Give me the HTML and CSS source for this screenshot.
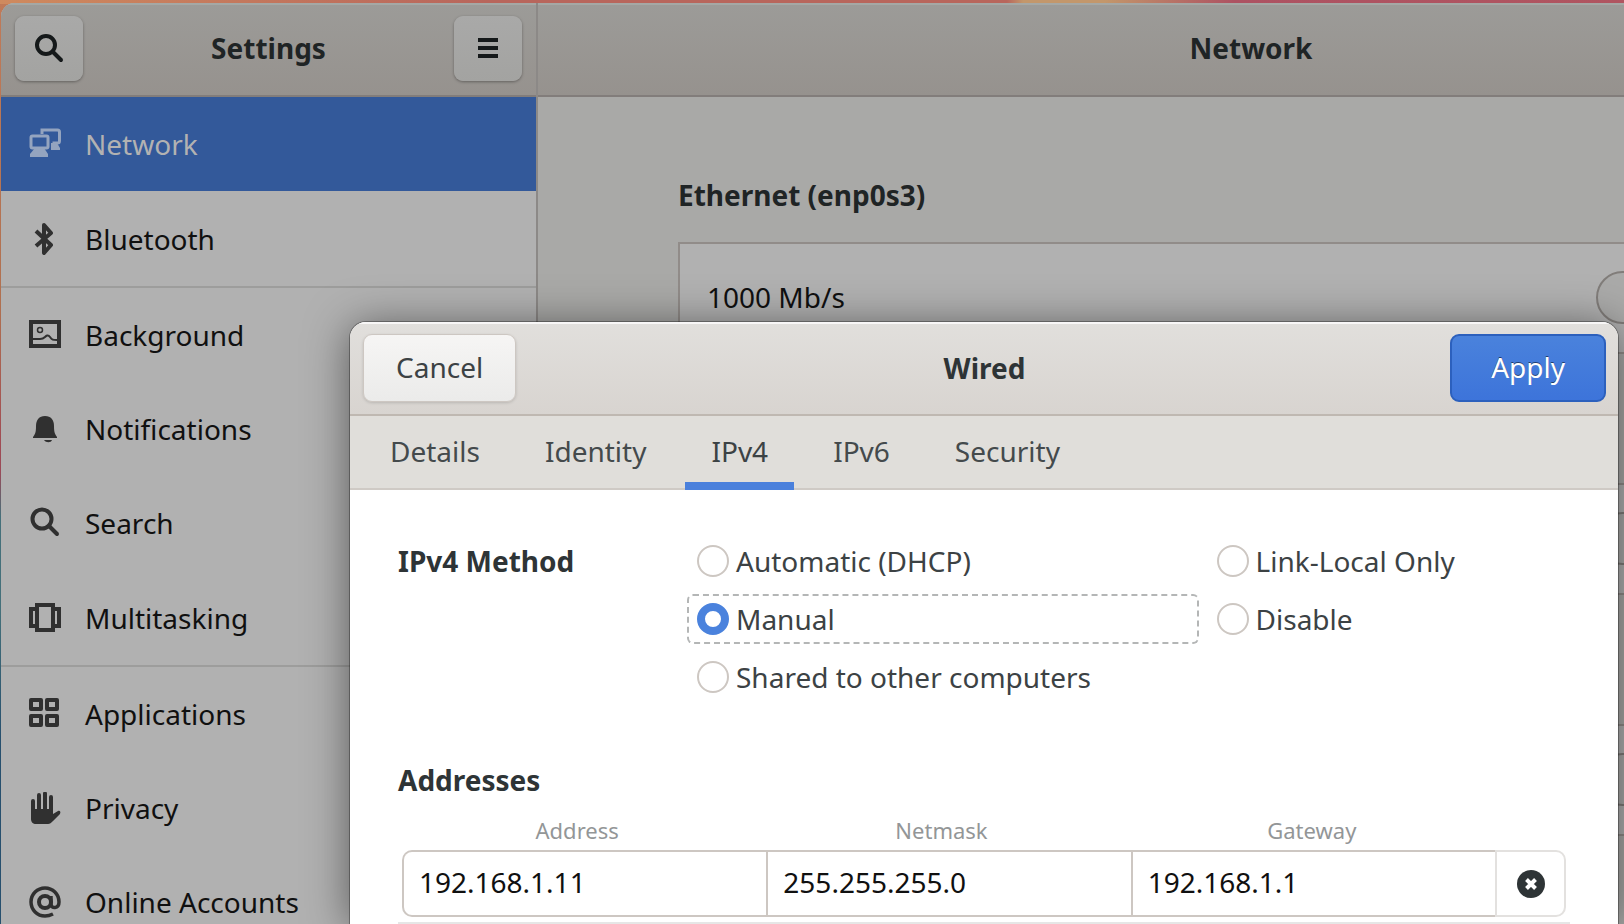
FILE: index.html
```html
<!DOCTYPE html>
<html lang="en">
<head>
    <meta charset="utf-8">
    <title>Settings</title>
    <link rel="stylesheet" href="styles.css">
</head>
<body>
<div class="window">
    <aside class="sidebar">
        <header class="headerbar">
            <button class="icon-button" aria-label="Search settings">
                <svg class="icon" viewBox="0 0 32 32"><circle cx="13" cy="13" r="9" fill="none" stroke="currentColor" stroke-width="4"/><path d="M20 20l8 8" stroke="currentColor" stroke-width="4" stroke-linecap="round"/></svg>
            </button>
            <h1>Settings</h1>
            <button class="icon-button" aria-label="Menu">
                <svg class="icon" viewBox="0 0 32 32"><path d="M6 8h20M6 16h20M6 24h20" stroke="currentColor" stroke-width="4"/></svg>
            </button>
        </header>
        <nav>
            <a href="#network" class="selected">
                <svg class="icon" viewBox="0 0 32 32"><path d="M13 6V2H28.500a2 2 0 0 1 2 2V13a2 2 0 0 1-2 2h-5" fill="none" stroke="currentColor" stroke-width="3"/><path d="M22 15h6l3 5v2h-9z" fill="currentColor"/><rect x="2" y="8" width="17" height="12" rx="1.500" fill="none" stroke="currentColor" stroke-width="3"/><path d="M6 20h9l4 6v3H1v-3z" fill="currentColor"/></svg>
                Network
            </a>
            <a href="#bluetooth" class="group-end">
                <svg class="icon" viewBox="0 0 32 32"><path d="M7 8l15 14-7 8V2l7 8L7 23" fill="none" stroke="currentColor" stroke-width="4" stroke-linejoin="round"/></svg>
                Bluetooth
            </a>
            <a href="#background">
                <svg class="icon" viewBox="0 0 32 32"><rect x="2" y="3" width="28" height="24" fill="none" stroke="currentColor" stroke-width="4"/><circle cx="11" cy="11" r="2.500" fill="none" stroke="currentColor" stroke-width="1.500"/><path d="M4 20h7c3 0 4-1 5-2s3-3 5 0 3 3 7 3" fill="none" stroke="currentColor" stroke-width="2"/></svg>
                Background
            </a>
            <a href="#notifications">
                <svg class="icon" viewBox="0 0 32 32"><path d="M16 3c6 0 9 4 9 10 0 7 1 8 3 11v1H4v-1c2-3 3-4 3-11 0-6 3-10 9-10z" fill="currentColor"/><path d="M15 27h8c-1 3-6 3-8 0z" fill="currentColor"/></svg>
                Notifications
            </a>
            <a href="#search">
                <svg class="icon" viewBox="0 0 32 32"><circle cx="13" cy="12" r="9.500" fill="none" stroke="currentColor" stroke-width="4"/><path d="M20 19l8 8" stroke="currentColor" stroke-width="4" stroke-linecap="round"/></svg>
                Search
            </a>
            <a href="#multitasking" class="group-end">
                <svg class="icon" viewBox="0 0 32 32"><path d="M8 3h16v25H8zM7 7H2v17h5M25 7h5v17h-5" fill="none" stroke="currentColor" stroke-width="4"/></svg>
                Multitasking
            </a>
            <a href="#applications">
                <svg class="icon" viewBox="0 0 32 32"><path d="M2 2h10v9H2zM18 2h10v9H18zM2 18h10v9H2zM18 18h10v9H18z" fill="none" stroke="currentColor" stroke-width="4" stroke-linejoin="round"/></svg>
                Applications
            </a>
            <a href="#privacy">
                <svg class="icon" viewBox="0 0 32 32"><path d="M4 9v14M10 3v16M16 1.500V19M22 5v14" fill="none" stroke="currentColor" stroke-width="4" stroke-linecap="round"/><path d="M2 17h22v5l5-3c2-1 3 1 2 3l-7 7c-2 2-3 3-5 3H7c-3 0-5-2-5-5z" fill="currentColor"/></svg>
                Privacy
            </a>
            <a href="#online-accounts">
                <svg class="icon" viewBox="0 0 32 32"><circle cx="16" cy="16" r="6" fill="none" stroke="currentColor" stroke-width="4"/><path d="M22 10v8c0 5 8 5 8-2A14 14 0 1 0 16 30c3 0 5-.5 8-2" fill="none" stroke="currentColor" stroke-width="3.500"/></svg>
                Online Accounts
            </a>
        </nav>
    </aside>
    <main class="panel">
        <header class="headerbar">
            <h1>Network</h1>
        </header>
        <div class="panel-body">
            <h2>Ethernet (enp0s3)</h2>
            <div class="card">
                <label for="ethernet">1000 Mb/s</label>
                <input type="checkbox" class="switch" id="ethernet">
            </div>
            <div class="card">
                <input type="checkbox" class="switch" aria-label="VPN">
            </div>
            <div class="card">
                <input type="checkbox" class="switch" aria-label="Network proxy">
            </div>
        </div>
    </main>
</div>

<form class="dialog" role="dialog" aria-labelledby="dialog-title">
    <header class="dialog-header">
        <button type="button" class="cancel">Cancel</button>
        <h1 id="dialog-title">Wired</h1>
        <button type="button" class="apply">Apply</button>
    </header>
    <div class="tabs" role="tablist">
        <button type="button" role="tab">Details</button>
        <button type="button" role="tab">Identity</button>
        <button type="button" role="tab" class="active" aria-selected="true">IPv4</button>
        <button type="button" role="tab">IPv6</button>
        <button type="button" role="tab">Security</button>
    </div>
    <div class="dialog-body">
        <div class="methods">
            <h2>IPv4 Method</h2>
            <label class="auto"><input type="radio" name="method">Automatic (DHCP)</label>
            <label><input type="radio" name="method">Link-Local Only</label>
            <label class="auto focused"><input type="radio" name="method" checked>Manual</label>
            <label><input type="radio" name="method">Disable</label>
            <label class="auto"><input type="radio" name="method">Shared to other computers</label>
        </div>
        <h2>Addresses</h2>
        <table>
            <thead>
                <tr>
                    <th id="address">Address</th>
                    <th id="netmask">Netmask</th>
                    <th id="gateway">Gateway</th>
                    <td class="remove-column"></td>
                </tr>
            </thead>
            <tbody>
                <tr>
                    <td><input type="text" aria-labelledby="address" value="192.168.1.11"></td>
                    <td><input type="text" aria-labelledby="netmask" value="255.255.255.0"></td>
                    <td><input type="text" aria-labelledby="gateway" value="192.168.1.1"></td>
                    <td>
                        <button type="button" class="remove" aria-label="Remove address">
                            <svg class="icon" viewBox="0 0 32 32"><circle cx="16" cy="16" r="14" fill="currentColor"/><path d="M11.500 11.500l9 9M20.500 11.500l-9 9" stroke="#fff" stroke-width="4"/></svg>
                        </button>
                    </td>
                </tr>
            </tbody>
        </table>
        <hr>
    </div>
</form>
</body>
</html>
```
FILE: styles.css
```css
* {
    box-sizing: border-box;
}
html, body {
    height: 100%;
}
body {
    position: relative;
    margin: 0;
    padding: 3px 0 0 1px;
    overflow: hidden;
    font-family: "Noto Sans", "Open Sans", sans-serif;
    font-size: 28px;
    line-height: 40px;
    color: #2e3436;
    background: linear-gradient(90deg, #cf8a5e 0, #b8665c 30%, #b8665c 62%, #c3976b 63%, #c3976b 68%, #ad5262 76%, #b05560 100%) top / 100% 4px no-repeat,
        linear-gradient(#c07a58 0, #b07050 33%, #a04c54 48%, #9a4a58 51%, #44707a 56%, #44707a 66%, #27506e 80%, #27506e 100%);
}
h1, h2 {
    margin: 0;
    font-size: 28px;
    font-weight: bold;
}
button, input {
    font: inherit;
    color: inherit;
    margin: 0;
}
.icon {
    display: block;
    flex: none;
    width: 32px;
    height: 32px;
}

/* the window runs past the right edge of the screen */
.window {
    display: flex;
    width: calc(100% + 340px);
    height: 100%;
    border-radius: 14px 0 0 0;
    overflow: hidden;
    background: #a9a9a7;
}
.headerbar {
    display: flex;
    align-items: center;
    justify-content: space-between;
    height: 94px;
    padding: 0 14px 4px;
    color: #1f2425;
    background: linear-gradient(#9c9b98, #96928e);
    border-top: 2px solid #a5a8a5;
    border-bottom: 2px solid #827d7b;
}
.icon-button {
    display: flex;
    align-items: center;
    justify-content: center;
    width: 68px;
    height: 65px;
    padding: 0;
    color: #15191a;
    background: linear-gradient(#a9a9a8, #a3a3a1);
    border: 0;
    border-radius: 9px;
    box-shadow: 0 1px 3px rgba(0, 0, 0, .35);
}
.sidebar {
    flex: none;
    width: 537px;
    background: #b1b1b1;
    border-right: 2px solid #8c8987;
}
.sidebar a {
    display: flex;
    align-items: center;
    gap: 24px;
    height: 94px;
    padding-left: 28px;
    color: #101010;
    text-decoration: none;
}
.sidebar a .icon {
    color: #303030;
}
.sidebar a.selected {
    color: #b2b2b2;
    background: #33599a;
}
.sidebar a.selected .icon {
    color: #94a4bf;
}
.sidebar a.group-end {
    height: 97px;
    border-bottom: 2px solid #9d9d9c;
}
.panel {
    flex: 1;
}
.panel .headerbar {
    justify-content: center;
}
.panel-body {
    padding: 78px 140px 0;
}
.panel-body h2 {
    color: #1f2425;
}
.card {
    display: flex;
    align-items: center;
    height: 112px;
    margin-bottom: 129px;
    padding: 0 130px 2px 27px;
    color: #101010;
    background: #b1b1b1;
    border: 2px solid #918c89;
}
.panel-body h2 + .card {
    margin-top: 27px;
}
.switch {
    appearance: none;
    width: 96px;
    height: 53px;
    margin-left: auto;
    border: 2px solid #817d7a;
    border-radius: 27px;
    background: #aaaaa9;
}

.dialog {
    position: absolute;
    top: 322px;
    right: 6px;
    bottom: 0;
    left: 350px;
    overflow: hidden;
    background: #fff;
    border-radius: 16px 16px 0 0;
    box-shadow: 0 0 0 1px rgba(0, 0, 0, .3), 0 4px 44px rgba(0, 0, 0, .5);
}
.dialog-header {
    display: grid;
    grid-template-columns: 1fr auto 1fr;
    align-items: center;
    height: 94px;
    padding: 0 12px 2px 13px;
    background: linear-gradient(#e1dfdc, #d8d4d0);
    border-top: 2px solid #f8f7f7;
    border-bottom: 2px solid #bfb8b1;
}
.cancel, .apply {
    height: 68px;
    padding: 0 32px 2px;
    border: 1px solid #cdc7c2;
    border-radius: 9px;
}
.cancel {
    justify-self: start;
    color: #3c4244;
    background: linear-gradient(#f6f5f4, #ebebea);
    box-shadow: 0 1px 3px rgba(0, 0, 0, .15);
}
.apply {
    justify-self: end;
    padding: 0 39px 2px;
    color: #fff;
    text-shadow: 0 -1px rgba(0, 0, 0, .5);
    background: linear-gradient(#4a82dc, #3d74da);
    border: 2px solid #2c60bd;
}
.tabs {
    display: flex;
    gap: 13px;
    height: 74px;
    padding: 0 14px;
    background: #e0deda;
    box-shadow: inset 0 -2px #cfcac5;
}
.tabs button {
    padding: 4px 26px 0;
    color: #444a4c;
    background: none;
    border: 0;
    border-bottom: 8px solid transparent;
}
.tabs .active {
    color: #3c4244;
    border-bottom-color: #4a80dc;
}
.dialog-body {
    padding: 46px 48px 0;
}
.methods {
    display: grid;
    grid-template-columns: 289px 7fr 5fr;
    grid-auto-rows: 50px;
    row-gap: 8px;
    align-items: center;
    margin: 0 6px 58px 0;
}
.methods label {
    display: flex;
    align-items: center;
    gap: 7px;
    height: 50px;
    padding-left: 8px;
    margin-left: 8px;
    color: #3c4244;
    border: 2px solid transparent;
}
.methods .auto {
    grid-column: 2;
    margin-left: 0;
}
.methods .focused {
    border: 2px dashed #b4b6b6;
    border-radius: 6px;
}
.methods input {
    appearance: none;
    flex: none;
    width: 32px;
    height: 32px;
    border: 2px solid #cdc7c2;
    border-radius: 50%;
    background: #fff;
}
.methods input:checked {
    border: 8px solid #4a82dd;
}
table {
    width: calc(100% - 8px);
    margin-left: 4px;
    table-layout: fixed;
    border-spacing: 0;
}
th {
    padding: 15px 14px 5px 0;
    font-size: 22px;
    font-weight: normal;
    line-height: 30px;
    color: #939697;
}
#gateway {
    padding-right: 2px;
}
td {
    padding: 0;
}
.remove-column {
    width: 71px;
}
tbody input {
    display: block;
    width: 100%;
    height: 67px;
    padding: 0 15px 3px;
    color: #101010;
    background: #fff;
    border: 2px solid #cdc7c2;
    border-right: 0;
    border-radius: 0;
}
td:first-child input {
    border-radius: 10px 0 0 10px;
}
.remove {
    display: flex;
    align-items: center;
    justify-content: center;
    width: 100%;
    height: 67px;
    padding: 0;
    background: #fff;
    border: 2px solid #e3e1df;
    border-radius: 0 10px 10px 0;
}
hr {
    height: 2px;
    margin: 5px 0 0;
    border: 0;
    background: #e6e6e6;
}
```
